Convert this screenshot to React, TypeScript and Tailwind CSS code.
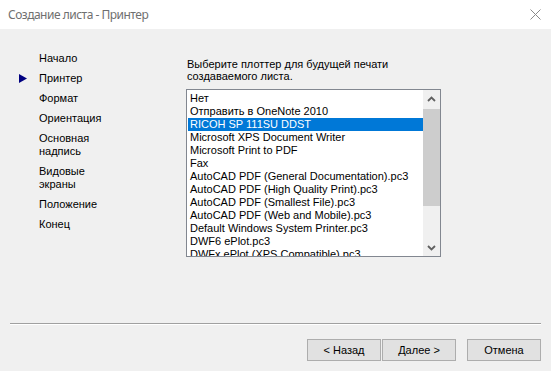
import React from "react";

const navItems: { label: string[]; active?: boolean }[] = [
  { label: ["Начало"] },
  { label: ["Принтер"], active: true },
  { label: ["Формат"] },
  { label: ["Ориентация"] },
  { label: ["Основная", "надпись"] },
  { label: ["Видовые", "экраны"] },
  { label: ["Положение"] },
  { label: ["Конец"] },
];

const plotters = [
  "Нет",
  "Отправить в OneNote 2010",
  "RICOH SP 111SU DDST",
  "Microsoft XPS Document Writer",
  "Microsoft Print to PDF",
  "Fax",
  "AutoCAD PDF (General Documentation).pc3",
  "AutoCAD PDF (High Quality Print).pc3",
  "AutoCAD PDF (Smallest File).pc3",
  "AutoCAD PDF (Web and Mobile).pc3",
  "Default Windows System Printer.pc3",
  "DWF6 ePlot.pc3",
  "DWFx ePlot (XPS Compatible).pc3",
];

const sans = "font-['Liberation_Sans',Arial,sans-serif]";

function Chevron({ up }: { up?: boolean }) {
  return (
    <svg width="9" height="6" viewBox="0 0 9 6">
      <path
        d={up ? "M1 5 L4.5 1.5 L8 5" : "M1 1 L4.5 4.5 L8 1"}
        fill="none"
        stroke="#606060"
        strokeWidth="1.8"
      />
    </svg>
  );
}

export default function App() {
  return (
    <div className={`w-[551px] h-[371px] flex flex-col bg-[#f0f0f0] overflow-hidden ${sans} text-[11px] text-black`}>
      {/* Title bar */}
      <div className="h-[29px] bg-white flex items-center justify-between pl-[8px] pr-[10px] shrink-0">
        <span className="font-['Noto_Sans',sans-serif] text-[12px] tracking-[-0.5px] text-[#6f6f6f] leading-none">
          Создание листа - Принтер
        </span>
        <svg width="11" height="11" viewBox="0 0 11 11">
          <path d="M0.5 0.5 L10.5 10.5 M10.5 0.5 L0.5 10.5" stroke="#8a8a8a" strokeWidth="1" />
        </svg>
      </div>

      {/* Main */}
      <div className="flex-1 flex">
        <ul className="w-[186px] pl-[19px] pt-[23px] flex flex-col gap-[7px] leading-[13px]">
          {navItems.map((it) => (
            <li key={it.label[0]} className="flex items-center">
              <span className="w-[20px] shrink-0 flex items-center">
                {it.active && (
                  <svg width="8" height="9" viewBox="0 0 8 9">
                    <path d="M0 0 L8 4.5 L0 9 Z" fill="#000080" />
                  </svg>
                )}
              </span>
              <span className="flex flex-col">
                {it.label.map((l) => (
                  <span key={l}>{l}</span>
                ))}
              </span>
            </li>
          ))}
        </ul>

        <div className="flex flex-col pt-[29px]">
          <p className="leading-[12px] pl-[1px]">
            Выберите плоттер для будущей печати
            <br />
            создаваемого листа.
          </p>
          <div className="mt-[7px] w-[255px] h-[168px] border border-[#828790] bg-white flex overflow-hidden">
            <div className="flex-1 pt-[2px] pl-[1px] overflow-hidden">
              {plotters.map((p, i) => (
                <div
                  key={p}
                  className={`h-[13px] leading-[13px] px-[2px] whitespace-nowrap ${
                    i === 2 ? "bg-[#0078d7] text-white" : ""
                  }`}
                >
                  {p}
                </div>
              ))}
            </div>
            <div className="w-[17px] bg-[#f0f0f0] flex flex-col shrink-0">
              <div className="h-[18px] flex items-center justify-center">
                <Chevron up />
              </div>
              <div className="mt-[1px] h-[97px] bg-[#cdcdcd]" />
              <div className="flex-1" />
              <div className="h-[17px] flex items-center justify-center">
                <Chevron />
              </div>
            </div>
          </div>
        </div>
      </div>

      {/* Footer */}
      <div className="shrink-0 mx-[10px] h-[2px] border-t border-t-[#a0a0a0] border-b border-b-white" />
      <div className="shrink-0 flex justify-end pr-[10px] pt-[14px] pb-[10px]">
        <button className="w-[74px] h-[22px] border border-[#adadad] bg-[#e1e1e1] leading-none">
          &lt; Назад
        </button>
        <button className="ml-[1px] w-[74px] h-[22px] border border-[#adadad] bg-[#e1e1e1] leading-none">
          Далее &gt;
        </button>
        <button className="ml-[11px] w-[74px] h-[22px] border border-[#adadad] bg-[#e1e1e1] leading-none">
          Отмена
        </button>
      </div>
    </div>
  );
}
